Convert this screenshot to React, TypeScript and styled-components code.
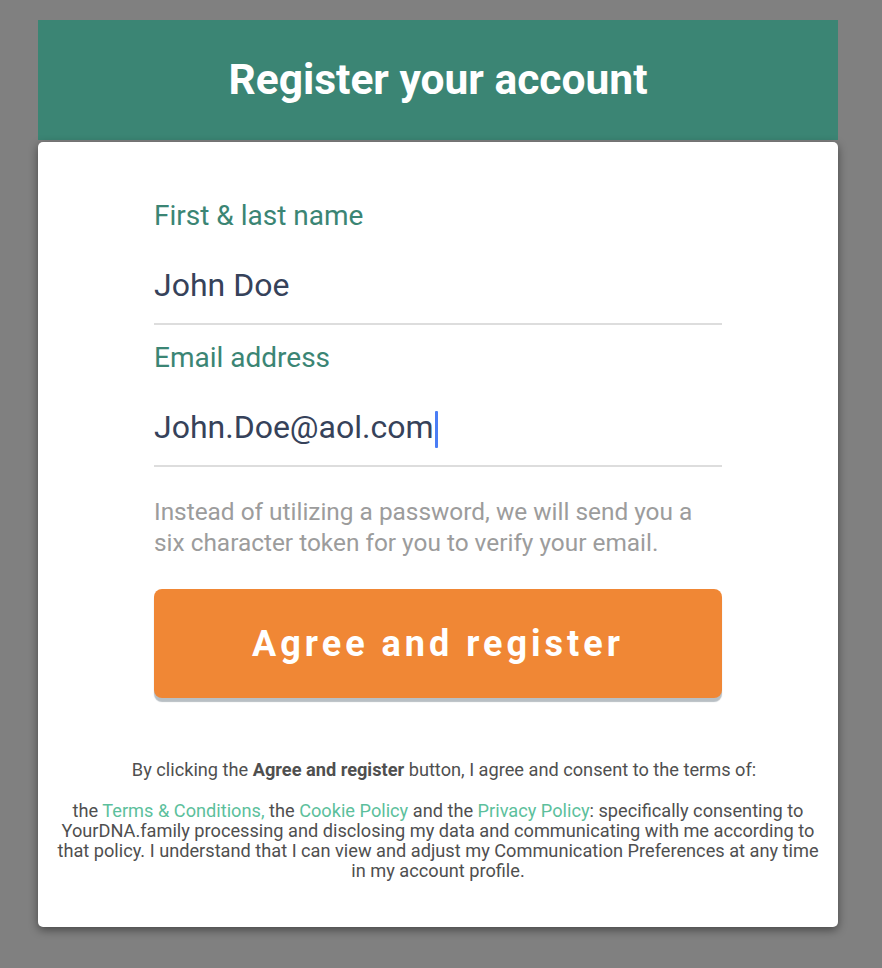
import React from "react";
import styled, { createGlobalStyle } from "styled-components";

const GlobalStyle = createGlobalStyle`
  html, body {
    margin: 0;
    padding: 0;
    background: #808080;
    font-family: Roboto, "Noto Sans", sans-serif;
  }
  * { box-sizing: border-box; }
`;

const Page = styled.div`
  padding: 20px 0 40px 38px;
`;

const Panel = styled.div`
  width: 800px;
`;

const Header = styled.header`
  height: 120px;
  background: #3b8574;
  display: flex;
  align-items: center;
  justify-content: center;
`;

const Title = styled.h1`
  margin: 0;
  color: #ffffff;
  font-size: 42.5px;
  font-weight: 700;
  line-height: 48px;
`;

const Card = styled.div`
  margin-top: 2px;
  background: #ffffff;
  border-radius: 5px;
  box-shadow: 0 3px 10px rgba(0, 0, 0, 0.45);
  padding: 57px 10px 46px;
`;

const Form = styled.div`
  padding: 0 106px;
  display: flex;
  flex-direction: column;
`;

const Field = styled.div`
  display: flex;
  flex-direction: column;
  border-bottom: 2px solid #dddddd;
  margin-bottom: 16px;
`;

const Label = styled.label`
  color: #3b8574;
  font-size: 28px;
  line-height: 34px;
`;

const Value = styled.div`
  height: 90px;
  padding: 28px 0 14px;
  color: #36425a;
  font-size: 32px;
  line-height: 48px;
  display: flex;
  align-items: center;
`;

const Caret = styled.span`
  display: inline-block;
  width: 3px;
  height: 37px;
  margin-left: 1px;
  margin-top: 4px;
  border-radius: 1px;
  background: #4a7df5;
`;

const Help = styled.p`
  margin: 13px 0 0;
  color: #9c9c9c;
  font-size: 24.4px;
  line-height: 31px;
`;

const Button = styled.button`
  margin-top: 31px;
  height: 109px;
  border: none;
  border-radius: 8px;
  background: #f08735;
  box-shadow: 0 4px 1px #b8bfc4;
  color: #ffffff;
  font-family: Roboto, "Noto Sans", sans-serif;
  font-size: 36px;
  font-weight: 700;
  letter-spacing: 4px;
  cursor: pointer;
`;

const Legal = styled.div`
  margin-top: 62px;
  color: #4f4f4f;
  font-size: 18.2px;
  line-height: 20px;
  text-align: center;
`;

const LegalPara = styled.p<{ $indent?: number }>`
  margin: 0 0 21px;
  padding-left: ${(p) => p.$indent ?? 0}px;
  &:last-child { margin-bottom: 0; }
`;

const Link = styled.a`
  color: #5cbf9c;
  text-decoration: none;
`;

export default function App() {
  return (
    <>
      <GlobalStyle />
      <Page>
        <Panel>
          <Header>
            <Title>Register your account</Title>
          </Header>
          <Card>
            <Form>
              <Field>
                <Label>First &amp; last name</Label>
                <Value>John Doe</Value>
              </Field>
              <Field>
                <Label>Email address</Label>
                <Value>
                  John.Doe@aol.com
                  <Caret />
                </Value>
              </Field>
              <Help>
                Instead of utilizing a password, we will send you a six character token for you to verify your email.
              </Help>
              <Button>Agree and register</Button>
            </Form>
            <Legal>
              <LegalPara $indent={12}>
                By clicking the <b>Agree and register</b> button, I agree and consent to the terms of:
              </LegalPara>
              <LegalPara>
                the <Link href="#">Terms &amp; Conditions,</Link> the <Link href="#">Cookie Policy</Link> and the{" "}
                <Link href="#">Privacy Policy</Link>: specifically consenting to YourDNA.family processing and
                disclosing my data and communicating with me according to that policy. I understand that I can view
                and adjust my Communication Preferences at any time in my account profile.
              </LegalPara>
            </Legal>
          </Card>
        </Panel>
      </Page>
    </>
  );
}
